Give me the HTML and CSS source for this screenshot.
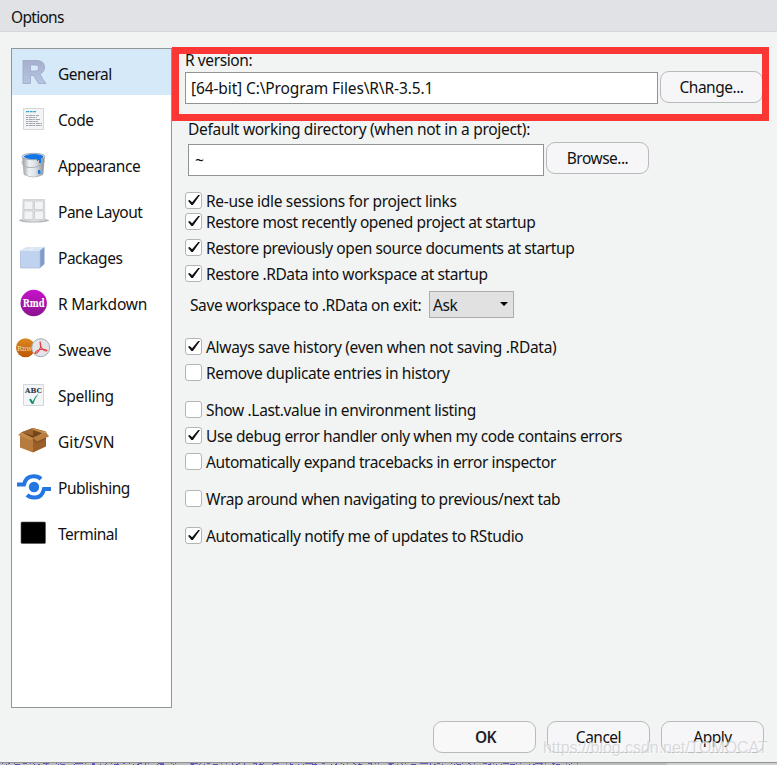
FILE: index.html
```html
<!DOCTYPE html>
<html lang="en">
<head>
<meta charset="utf-8">
<title>Options</title>
<link rel="stylesheet" href="styles.css">
</head>
<body>
<div class="dialog">
  <header class="titlebar"><span>Options</span></header>
  <div class="content">
    <nav class="sidebar">
      <div class="item selected">
        <svg class="icon" viewBox="0 2 36 36"><defs><linearGradient id="rg" x1="0" y1="0" x2="0" y2="1"><stop offset="0" stop-color="#a6afcd"/><stop offset="1" stop-color="#b6c4e3"/></linearGradient></defs><path fill="url(#rg)" stroke="#9ca7c4" stroke-width=".8" fill-rule="evenodd" d="M7 6.500H20C26 6.500 28.500 9 28.500 13.200C28.500 16.700 26.500 19 24 20L27 25.500L30 29.500H22.500L17.500 21.500H14.500V29.500H7ZM14.500 11V17H18.500C21.500 17 22.500 16 22.500 14C22.500 12 21.500 11 18.500 11Z"/></svg>
        <span>General</span></div>
      <div class="item">
        <svg class="icon" viewBox="0 2 36 36"><path fill="#f3f4f5" stroke="#d3d7da" d="M7.500 8.500h20v21h-20z"/><path stroke="#36a9d2" stroke-width="1.300" stroke-dasharray="3 .6" d="M10 11.700h10"/><path stroke="#a0a4a8" stroke-width="1" stroke-dasharray="2 .7 4 .5" d="M10 15.500h13M10 17.500h11M10 19.500h14M10 21.500h12M10 23.500h16M10 25.500h16"/></svg>
        <span>Code</span></div>
      <div class="item">
        <svg class="icon" viewBox="0 0 36 36"><defs><linearGradient id="bg"><stop stop-color="#999fa5"/><stop offset=".3" stop-color="#f1f2f3"/><stop offset=".6" stop-color="#dce0e4"/><stop offset="1" stop-color="#858b93"/></linearGradient></defs><path fill="url(#bg)" stroke="#969ca3" stroke-width=".5" d="M6.500 8.500L8 26.500Q17 31.500 27 26.500L28.500 8.500Z"/><ellipse cx="17.500" cy="8.500" rx="11.500" ry="3.200" fill="#edf0f2" stroke="#8d969e" stroke-width=".8"/><path fill="#1475e5" d="M7.500 8.500Q10 6 18 6T27.500 8.500Q27 10 25 10.500V15H23V12H22V13H21V11Q11 12 7.500 8.500Z"/><path fill="none" stroke="#a1a7ad" stroke-width=".8" d="M6 13Q5 18 13 19.500Q23 20.500 29 13"/><path fill="#197ce7" d="M22 22h2l.8 3q-1.500 2-3 0z"/></svg>
        <span>Appearance</span></div>
      <div class="item">
        <svg class="icon" viewBox="0 2 36 36"><ellipse cx="18" cy="28.500" rx="15" ry="2" fill="#b5b8ba"/><path fill="#e0e2e4" stroke="#c8cbce" stroke-width=".7" d="M7 7.500H28.500L29 28Q18 31 6.500 28Z"/><path fill="#f2f3f4" stroke="#c3c7ca" stroke-width=".7" d="M8 9h9v8.500H8zM18.500 9h9v8.500h-9zM8 19h9v8.500H8zM18.500 19h9v8.500h-9z"/></svg>
        <span>Pane Layout</span></div>
      <div class="item">
        <svg class="icon" viewBox="0 1 36 36"><path fill="#bfd2ef" d="M4.500 11.500H24V29H4.500Z"/><path fill="#d9e6f6" d="M4.500 11.500L10 8H28.500L24 11.500Z"/><path fill="#839bcb" d="M24 11.500L28.500 8V25L24 29Z"/><path stroke="#f2f6fc" d="M14 11.500l4-3.500"/><path stroke="#a7badb" fill="none" stroke-width=".7" d="M4.500 11.500v17.500H24V12"/></svg>
        <span>Packages</span></div>
      <div class="item">
        <svg class="icon" viewBox="0 0 36 36"><defs><linearGradient id="mg" x1="0" y1="0" x2="0" y2="1"><stop stop-color="#c713cc"/><stop offset="1" stop-color="#8a138d"/></linearGradient></defs><circle cx="17.700" cy="17" r="13.200" fill="url(#mg)"/><text class="rmd" x="17.700" y="20.800" textLength="22" lengthAdjust="spacingAndGlyphs">Rmd</text></svg>
        <span class="wide-text">R Markdown</span></div>
      <div class="item">
        <svg class="icon" viewBox="0 0 36 36"><defs><linearGradient id="og" x1="0" y1="0" x2="0" y2="1"><stop stop-color="#db8a20"/><stop offset="1" stop-color="#bd5605"/></linearGradient></defs><circle cx="9.500" cy="15.700" r="9.500" fill="url(#og)"/><text class="rnw" x="1" y="18.500" textLength="15" lengthAdjust="spacingAndGlyphs">Rnw</text><circle cx="24.700" cy="15.700" r="9" fill="#e4e5e9" stroke="#a6abb1"/><path fill="none" stroke="#e23e45" stroke-width="1.100" d="M24 9.500Q25.500 14 23.500 17.500Q21 22 19 21.500Q19 19 24 17.500Q30 16.500 31 18.500Q29 20 26 16.500Q23.500 13 24 9.500"/></svg>
        <span class="wide-text">Sweave</span></div>
      <div class="item">
        <svg class="icon" viewBox="0 0 36 36"><path fill="#f3f5f8" stroke="#d2d7db" d="M7.500 6.500h20v21h-20z"/><text class="abc" x="17.500" y="15" textLength="17" lengthAdjust="spacingAndGlyphs">ABC</text><path fill="#159365" d="M13 21.500l2-.7 1.700 2.700q2-5 5.800-8-3.500 5-5.200 10.500h-1.500z"/></svg>
        <span class="wide-text">Spelling</span></div>
      <div class="item">
        <svg class="icon" viewBox="0 1.500 36 36"><path fill="#b77b3e" d="M4 11L17 16V30L4 25Z"/><path fill="#9b5f29" d="M17 16L30 12V24L17 30Z"/><path fill="#754719" d="M5 10L17 5.500 30 9 17 16Z"/><path fill="#9c672f" d="M5 10L17 5.500V13Z"/><path fill="#c58a48" d="M5 10L17 15.500 15 18 2 12.500ZM17 5.500L29 9l-2 2-11-4Z"/><path fill="#b87d40" d="M17 15L30 9.500 33 14 21 19Z"/><path fill="#8d5525" d="M17 16l4 3 9-4v2l-9 4-4-3z"/></svg>
        <span class="git">Git/SVN</span></div>
      <div class="item">
        <svg class="icon" viewBox="0 0 36 36"><circle cx="18" cy="17" r="5.200" fill="#2477e3"/><path fill="none" stroke="#2477e3" stroke-width="4" d="M1 14.500H8Q10 6.500 17 6.300Q22 6 25 9M35 19H28Q26 27.500 19 27.500Q14 27.800 11 25"/></svg>
        <span>Publishing</span></div>
      <div class="item">
        <svg class="icon" viewBox="0 0 36 36"><rect x="5" y="6" width="24.500" height="21.500" rx="1" fill="#000" stroke="#555" stroke-width=".6"/></svg>
        <span>Terminal</span></div>
    </nav>
    <main class="panel">
      <div class="label version-label"><span>R version:</span></div>
      <div class="field-row version-row"><div class="input wide"><span>[64-bit] C:\Program Files\R\R-3.5.1</span></div><button class="button"><span>Change...</span></button></div>
      <div class="label dir-label"><span>Default working directory (when not in a project):</span></div>
      <div class="field-row dir-row"><div class="input"><span>~</span></div><button class="button"><span>Browse...</span></button></div>
      <div class="check first"><i class="box on"></i><span class="loose">Re-use idle sessions for project links</span></div>
      <div class="check tight"><i class="box on"></i><span>Restore most recently opened project at startup</span></div>
      <div class="check"><i class="box on"></i><span>Restore previously open source documents at startup</span></div>
      <div class="check"><i class="box on"></i><span>Restore .RData into workspace at startup</span></div>
      <div class="save-row"><span class="save-label">Save workspace to .RData on exit:</span><div class="select"><span>Ask</span><i class="arrow"></i></div></div>
      <div class="check group"><i class="box on"></i><span class="loose">Always save history (even when not saving .RData)</span></div>
      <div class="check"><i class="box"></i><span class="semi">Remove duplicate entries in history</span></div>
      <div class="check group"><i class="box"></i><span class="semi">Show .Last.value in environment listing</span></div>
      <div class="check"><i class="box on"></i><span>Use debug error handler only when my code contains errors</span></div>
      <div class="check"><i class="box"></i><span>Automatically expand tracebacks in error inspector</span></div>
      <div class="check group"><i class="box"></i><span class="semi">Wrap around when navigating to previous/next tab</span></div>
      <div class="check group"><i class="box on"></i><span class="semi">Automatically notify me of updates to RStudio</span></div>
      <div class="highlight"></div>
    </main>
  </div>
  <footer class="actions">
    <button class="button ok"><span>OK</span></button>
    <button class="button"><span>Cancel</span></button>
    <button class="button"><span>Apply</span></button>
  </footer>
  <div class="watermark">https://blog.csdn.net/TOMOCAT</div>
</div>
<svg class="behind" viewBox="0 0 777 3"><path fill="#bcbdbd" d="M0 0h777v3H0z"/><path fill="#cfd0d0" d="M667 1h110v2H667z"/><path stroke="#4436b5" stroke-opacity=".7" stroke-dasharray="1 5 2 4 1 8 4 3 1 2 1 9 6 7 1 3 1 14 8 2 1 6 3 11 1 4 1 5" d="M2 1.500h580"/><path stroke="#3030c0" stroke-opacity=".75" stroke-dasharray="1 8 5 14 1 3 2 6 1 11 1 2 4 9 1 17 3 5 1 4" d="M6 2.500h577"/><path stroke="#929494" d="M0 .5h777"/></svg>
</body>
</html>
```
FILE: styles.css
```css
* { box-sizing: border-box; }
body {
  margin: 0;
  width: 777px;
  height: 765px;
  overflow: hidden;
  background: #f2f4f3;
  color: #111;
  font: 15.5px/20px "Noto Sans", "Open Sans", sans-serif;
  letter-spacing: -0.4px;
}
span { white-space: nowrap; }
.dialog { position: relative; height: 762px; display: flex; flex-direction: column; }
.titlebar { height: 32px; padding: 7px 11px 0; background: #e1e2e6; border-bottom: 1px solid #d5d7da; letter-spacing: -0.7px; }
.content { display: flex; height: 676px; padding: 16px 0 0 11px; }
.sidebar { width: 161px; height: 660px; background: #fff; border: 1px solid #949695; letter-spacing: -0.48px; }
.item { display: flex; align-items: center; height: 46px; padding: 3px 0 0 4px; }
.item.selected { background: #d6e9f8; }
.item .wide-text { letter-spacing: -0.25px; }
.item .git { letter-spacing: 0.05px; }
.icon { width: 36px; height: 36px; margin: 1px 6px 0 0; flex: none; letter-spacing: 0; }
.rmd { font: bold 11px "DejaVu Serif", serif; fill: #fff; text-anchor: middle; }
.rnw { font: 8px "DejaVu Serif", serif; fill: #f6d9a9; }
.abc { font: bold 8px "DejaVu Serif", serif; fill: #30353a; text-anchor: middle; }
.panel { position: relative; flex: 1; padding-left: 13px; }
.label { height: 20px; }
.version-label { margin: 2px 0 0; }
.version-row { margin-top: 1px; }
.dir-label { margin: 15px 0 0 3px; letter-spacing: -0.3px; }
.dir-row { margin: 3px 0 0 3px; }
.field-row { display: flex; gap: 2px; align-items: flex-start; }
.input { width: 356px; height: 32px; margin-top: 1px; padding: 5px; border: 1px solid #929493; background: #fff; letter-spacing: -0.12px; }
.input.wide { width: 473px; }
.dir-row .input { margin-top: 2px; padding-left: 6px; }
.button {
  width: 103px; height: 32px; padding: 0 0 1px;
  border: 1px solid #b9babb; border-radius: 9px; background: #f6f6f9;
  color: #111; font: inherit; letter-spacing: -0.5px;
}
.check { display: flex; align-items: center; height: 17px; margin-top: 9px; gap: 4px; }
.check span { line-height: 17px; padding-top: 2px; }
.check .loose { letter-spacing: -0.3px; }
.check .semi { letter-spacing: -0.36px; }
.check.first { margin-top: 16px; }
.check.tight { margin-top: 4px; }
.check.group { margin-top: 20px; }
.box { position: relative; width: 17px; height: 17px; border: 1px solid #b4b4b4; border-radius: 3px; background: #fff; }
.box.on::before {
  content: ""; position: absolute; left: 2px; top: 2px; width: 12px; height: 10px; background: #111;
  clip-path: polygon(0 57%, 14% 49%, 34% 72%, 85% 0, 100% 0, 41% 100%, 28% 100%);
}
.save-row { display: flex; align-items: center; height: 27px; margin: 9px 0 0 5px; }
.save-label { width: 239px; }
.select { display: flex; align-items: center; justify-content: space-between; width: 85px; height: 27px; padding: 0 5px 0 3px; background: #e1e1e1; border: 1px solid #adadad; }
.arrow { border: 4px solid transparent; border-top-color: #000; border-bottom: 0; margin-top: -2px; }
.highlight { position: absolute; left: 0; top: -1px; width: 597px; height: 74px; border: 7px solid #fb3736; }
.actions { display: flex; gap: 11px; justify-content: flex-end; padding: 13px 13px 0 0; }
.ok { font-weight: 600; background: #f8f8f8; color: #222; }
.ok span { padding-left: 2px; }
.watermark { position: absolute; left: 543px; top: 738px; font: 16px/20px "Liberation Sans", sans-serif; letter-spacing: -0.05px; color: rgba(205, 207, 209, .75); text-shadow: 1px 1px 0 rgba(255, 255, 255, .7); white-space: nowrap; }
.behind { display: block; width: 777px; height: 3px; }
```
